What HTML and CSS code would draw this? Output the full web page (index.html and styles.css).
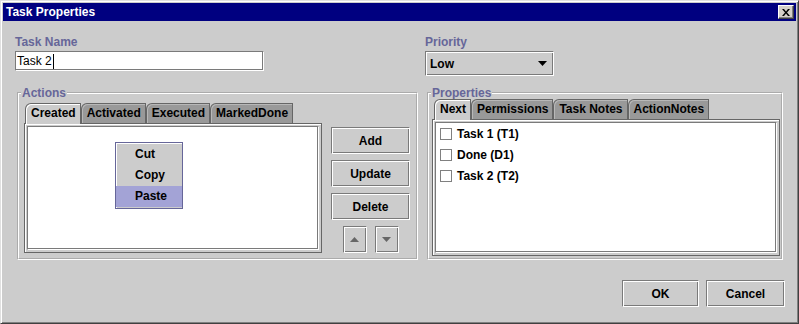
FILE: index.html
```html
<!DOCTYPE html>
<html lang="en">
<head>
  <meta charset="UTF-8"/>
  <title>Task Properties</title>
  <link rel="stylesheet" href="styles.css">
</head>
<body>

  <div class="window">
    <div class="titlebar">
      <span class="title">Task Properties</span>
      <span class="close">
        <svg width="8" height="7" viewBox="0 0 8 7"><path d="M0 0h2l2 2.5 2-2.5h2l-3 3.5 3 3.5h-2l-2-2.5-2 2.5h-2l3-3.5z" fill="#000"/></svg>
      </span>
    </div>

    <div class="content">
      <div class="columns">
        <div class="field">
          <label class="caption">Task Name</label>
          <div class="textfield">Task 2<span class="caret"></span></div>
        </div>
        <div class="field field-right">
          <label class="caption">Priority</label>
          <div class="combo">
            <span>Low</span>
            <svg width="9" height="5" viewBox="0 0 9 5"><path d="M0 0h9l-4.5 5z" fill="#000"/></svg>
          </div>
        </div>
      </div>

      <div class="columns groups">
        <fieldset class="group">
          <legend>Actions</legend>
          <div class="group-body actions-body">
            <div class="tabpane actions-pane">
              <div class="tabs">
                <span class="tab selected">Created</span>
                <span class="tab">Activated</span>
                <span class="tab">Executed</span>
                <span class="tab">MarkedDone</span>
              </div>
              <div class="tab-body">
                <div class="list">
                  <div class="popup">
                    <div class="menu-item">Cut</div>
                    <div class="menu-item">Copy</div>
                    <div class="menu-item active">Paste</div>
                  </div>
                </div>
              </div>
            </div>

            <div class="side">
              <button class="btn">Add</button>
              <button class="btn">Update</button>
              <button class="btn">Delete</button>
              <div class="arrows">
                <button class="btn btn-arrow">
                  <svg width="9" height="5" viewBox="0 0 9 5"><path d="M0 5h9l-4.5-5z" fill="#666"/></svg>
                </button>
                <button class="btn btn-arrow">
                  <svg width="9" height="5" viewBox="0 0 9 5"><path d="M0 0h9l-4.5 5z" fill="#666"/></svg>
                </button>
              </div>
            </div>
          </div>
        </fieldset>

        <fieldset class="group">
          <legend>Properties</legend>
          <div class="group-body props-body">
            <div class="tabpane props-pane">
              <div class="tabs">
                <span class="tab selected">Next</span>
                <span class="tab">Permissions</span>
                <span class="tab">Task Notes</span>
                <span class="tab">ActionNotes</span>
              </div>
              <div class="tab-body">
                <div class="list list-checks">
                  <div class="check-row"><span class="checkbox"></span>Task 1 (T1)</div>
                  <div class="check-row"><span class="checkbox"></span>Done (D1)</div>
                  <div class="check-row"><span class="checkbox"></span>Task 2 (T2)</div>
                </div>
              </div>
            </div>
          </div>
        </fieldset>
      </div>

      <div class="footer">
        <button class="btn btn-ok">OK</button>
        <button class="btn btn-cancel">Cancel</button>
      </div>
    </div>
  </div>

</body>
</html>
```

FILE: styles.css
```css
:root {
  --bg: #cccccc;
  --navy: #000080;
  --caption: #666699;
  --dark: #7a7a7a;
  --tab-off: #999999;
  --select: #a3a3d6;
  --light: #ffffff;
}
* { box-sizing: border-box; margin: 0; padding: 0; }
body {
  font-family: "Liberation Sans", Arial, sans-serif;
  font-size: 12px;
  color: #000;
  background: var(--bg);
}
.window {
  width: 799px;
  height: 324px;
  background: var(--bg);
  border: 1px solid;
  border-color: #e0e0e0 #404040 #404040 #e0e0e0;
  box-shadow: inset 1px 1px var(--light), inset -1px -1px #808080;
  padding: 2px;
  display: flex;
  flex-direction: column;
}
.titlebar {
  height: 18px;
  background: var(--navy);
  color: var(--light);
  font-weight: bold;
  display: flex;
  align-items: center;
  justify-content: space-between;
  padding: 0 2px 0 3px;
}
.close {
  width: 16px;
  height: 14px;
  background: #d4d0c8;
  border: 1px solid;
  border-color: var(--light) #404040 #404040 var(--light);
  box-shadow: inset -1px -1px #808080;
  display: flex;
  align-items: center;
  justify-content: center;
}
.content {
  flex: 1;
  padding: 14px 12px 0 12px;
  display: flex;
  flex-direction: column;
}
.columns {
  display: grid;
  grid-template-columns: 403px 358px;
  column-gap: 7px;
  align-items: start;
}
.caption {
  display: block;
  color: var(--caption);
  font-weight: bold;
  line-height: 15px;
  margin-bottom: 1px;
}
.textfield {
  width: 249px;
  height: 20px;
  background: var(--light);
  border: 1px solid;
  border-color: var(--dark) var(--light) var(--light) var(--dark);
  box-shadow: inset -1px -1px var(--dark);
  padding-left: 1px;
  line-height: 18px;
  display: flex;
  align-items: center;
}
.caret {
  width: 1px;
  height: 15px;
  background: #000;
  margin-left: 1px;
}
.combo {
  width: 129px;
  height: 25px;
  background: var(--bg);
  border: 1px solid;
  border-color: var(--dark) var(--light) var(--light) var(--dark);
  box-shadow: inset 1px 1px var(--light), inset -1px -1px var(--dark);
  display: flex;
  align-items: center;
  justify-content: space-between;
  padding: 0 6px 0 4px;
  font-weight: bold;
}

/* titled groups */
.groups {
  margin-top: 11px;
  align-items: stretch;
}
.group {
  margin-left: 2px;
  border: 2px groove var(--light);
  display: flex;
  flex-direction: column;
  min-width: 0;
  padding: 0;
}
.group legend {
  color: var(--caption);
  font-weight: bold;
  line-height: 12px;
  padding: 0 1px;
  margin-left: 2px;
}
.group-body {
  flex: 1;
  display: flex;
}
.actions-body { padding: 4px 0 5px 5px; }
.props-body { padding: 0 1px 2px 3px; }

/* tabbed panes */
.tabpane {
  display: flex;
  flex-direction: column;
}
.actions-pane { width: 298px; }
.props-pane { flex: 1; }
.tabs {
  display: flex;
  align-items: flex-end;
  height: 20px;
  margin-left: 1px;
  position: relative;
  z-index: 1;
}
.props-pane .tabs { margin-left: 2px; }
.tab {
  height: 20px;
  padding: 0 4px 0 5px;
  font-weight: bold;
  line-height: 19px;
  background: var(--tab-off);
  border: 1px solid #666;
  border-bottom: 0;
  border-top-left-radius: 6px;
  box-shadow: inset 1px 1px #b8b8b8;
}
.tab.selected {
  height: 21px;
  margin-bottom: -1px;
  background: var(--bg);
  box-shadow: inset 1px 1px var(--light);
}
.tab-body {
  flex: 1;
  border: 1px solid #666;
  box-shadow: inset 1px 1px var(--light);
  background: var(--bg);
  padding: 2px;
  display: flex;
}
.list {
  flex: 1;
  background: var(--light);
  border: 1px solid;
  border-color: var(--dark) var(--light) var(--light) var(--dark);
  box-shadow: inset -1px -1px var(--dark);
  position: relative;
}

/* popup menu over the list */
.popup {
  position: absolute;
  left: 87px;
  top: 15px;
  width: 68px;
  background: var(--bg);
  border: 1px solid var(--caption);
  box-shadow: inset 1px 1px var(--light);
  padding: 1px 0 1px 0;
}
.menu-item {
  height: 21px;
  line-height: 21px;
  padding-left: 19px;
  font-weight: bold;
}
.menu-item.active { background: var(--select); }

/* buttons */
.btn {
  font-family: inherit;
  font-size: 12px;
  font-weight: bold;
  color: #000;
  height: 27px;
  background: var(--bg);
  border: 1px solid;
  border-color: var(--dark) var(--light) var(--light) var(--dark);
  box-shadow: inset 1px 1px var(--light), inset -1px -1px var(--dark);
  display: flex;
  align-items: center;
  justify-content: center;
}
.side {
  width: 79px;
  margin: 24px 0 0 9px;
  display: flex;
  flex-direction: column;
  gap: 6px;
}
.arrows {
  display: flex;
  justify-content: center;
  gap: 8px;
}
.btn-arrow { width: 24px; }

.check-row {
  height: 21px;
  display: flex;
  align-items: center;
  gap: 5px;
  padding-left: 4px;
  font-weight: bold;
}
.checkbox {
  width: 12px;
  height: 12px;
  border: 1px solid #808080;
  box-shadow: inset 1px 1px var(--light);
  background: var(--light);
}

.footer {
  margin-top: 20px;
  margin-right: -1px;
  display: flex;
  justify-content: flex-end;
  gap: 7px;
}
.btn-ok { width: 77px; }
.btn-cancel { width: 79px; }
```
